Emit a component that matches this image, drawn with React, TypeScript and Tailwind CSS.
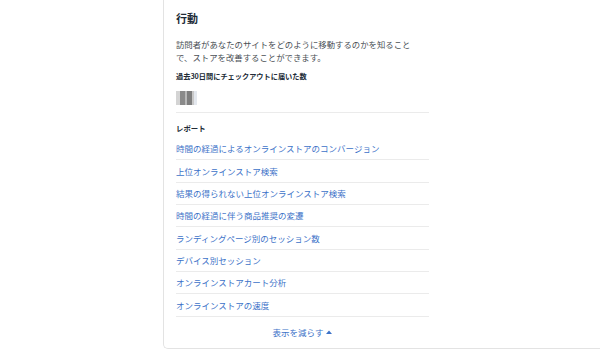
const reports = [
  "時間の経過によるオンラインストアのコンバージョン",
  "上位オンラインストア検索",
  "結果の得られない上位オンラインストア検索",
  "時間の経過に伴う商品推奨の変遷",
  "ランディングページ別のセッション数",
  "デバイス別セッション",
  "オンラインストアカート分析",
  "オンラインストアの速度",
];

const font = { fontFamily: '"Noto Sans CJK JP", "Noto Sans", sans-serif' };

function BlurredNumber() {
  // pixelated placeholder for the hidden count
  return (
    <div className="flex h-[14px] w-[22px] blur-[0.6px]">
      <div className="w-[4px] bg-[#d4d4d4]" />
      <div className="w-[5px] bg-[#8a8a8a]" />
      <div className="w-[2px] bg-[#b8b8b8]" />
      <div className="w-[5px] bg-[#7e7e7e]" />
      <div className="w-[2px] bg-[#c8c8c8]" />
      <div className="w-[3px] bg-[#e4e8ee]" />
    </div>
  );
}

export default function App() {
  return (
    <div className="flex h-[350px] w-[600px] bg-white" style={font}>
      <div className="w-[163px] shrink-0" />
      <div className="h-[349px] w-[437px] rounded-bl-[5px] border-b border-l border-[#e3e3e3] pl-[12px] pt-[10px]">
        <div className="w-[253px]">
          <h2 className="text-[11px] font-bold leading-[16px] text-[#212b36]">行動</h2>
          <p className="mt-[11.5px] whitespace-nowrap text-[8.4px] leading-[13px] text-[#4a4f55]">
            訪問者があなたのサイトをどのように移動するのかを知ること
            <br />
            で、ストアを改善することができます。
          </p>
          <div className="mt-[6.5px] text-[7.2px] font-bold leading-[12px] text-[#212b36]">
            過去30日間にチェックアウトに届いた数
          </div>
          <div className="mt-[9px]">
            <BlurredNumber />
          </div>
          <div className="mt-[7px] border-b border-[#ebebeb]" />
          <div className="mt-[9px] text-[7.4px] font-bold leading-[12px] text-[#212b36]">レポート</div>
          <ul className="mt-[4px]">
            {reports.map((r) => (
              <li
                key={r}
                className="flex h-[22.34px] items-center border-b border-[#ebebeb] text-[8.5px] text-[#3c72c8]"
              >
                {r}
              </li>
            ))}
          </ul>
          <div className="flex h-[31px] items-center justify-center gap-[3px] text-[8.5px] text-[#3c72c8]">
            <span>表示を減らす</span>
            <svg width="6" height="4" viewBox="0 0 6 4">
              <path d="M0 4 L3 0.5 L6 4 Z" fill="#3c72c8" />
            </svg>
          </div>
        </div>
      </div>
    </div>
  );
}
